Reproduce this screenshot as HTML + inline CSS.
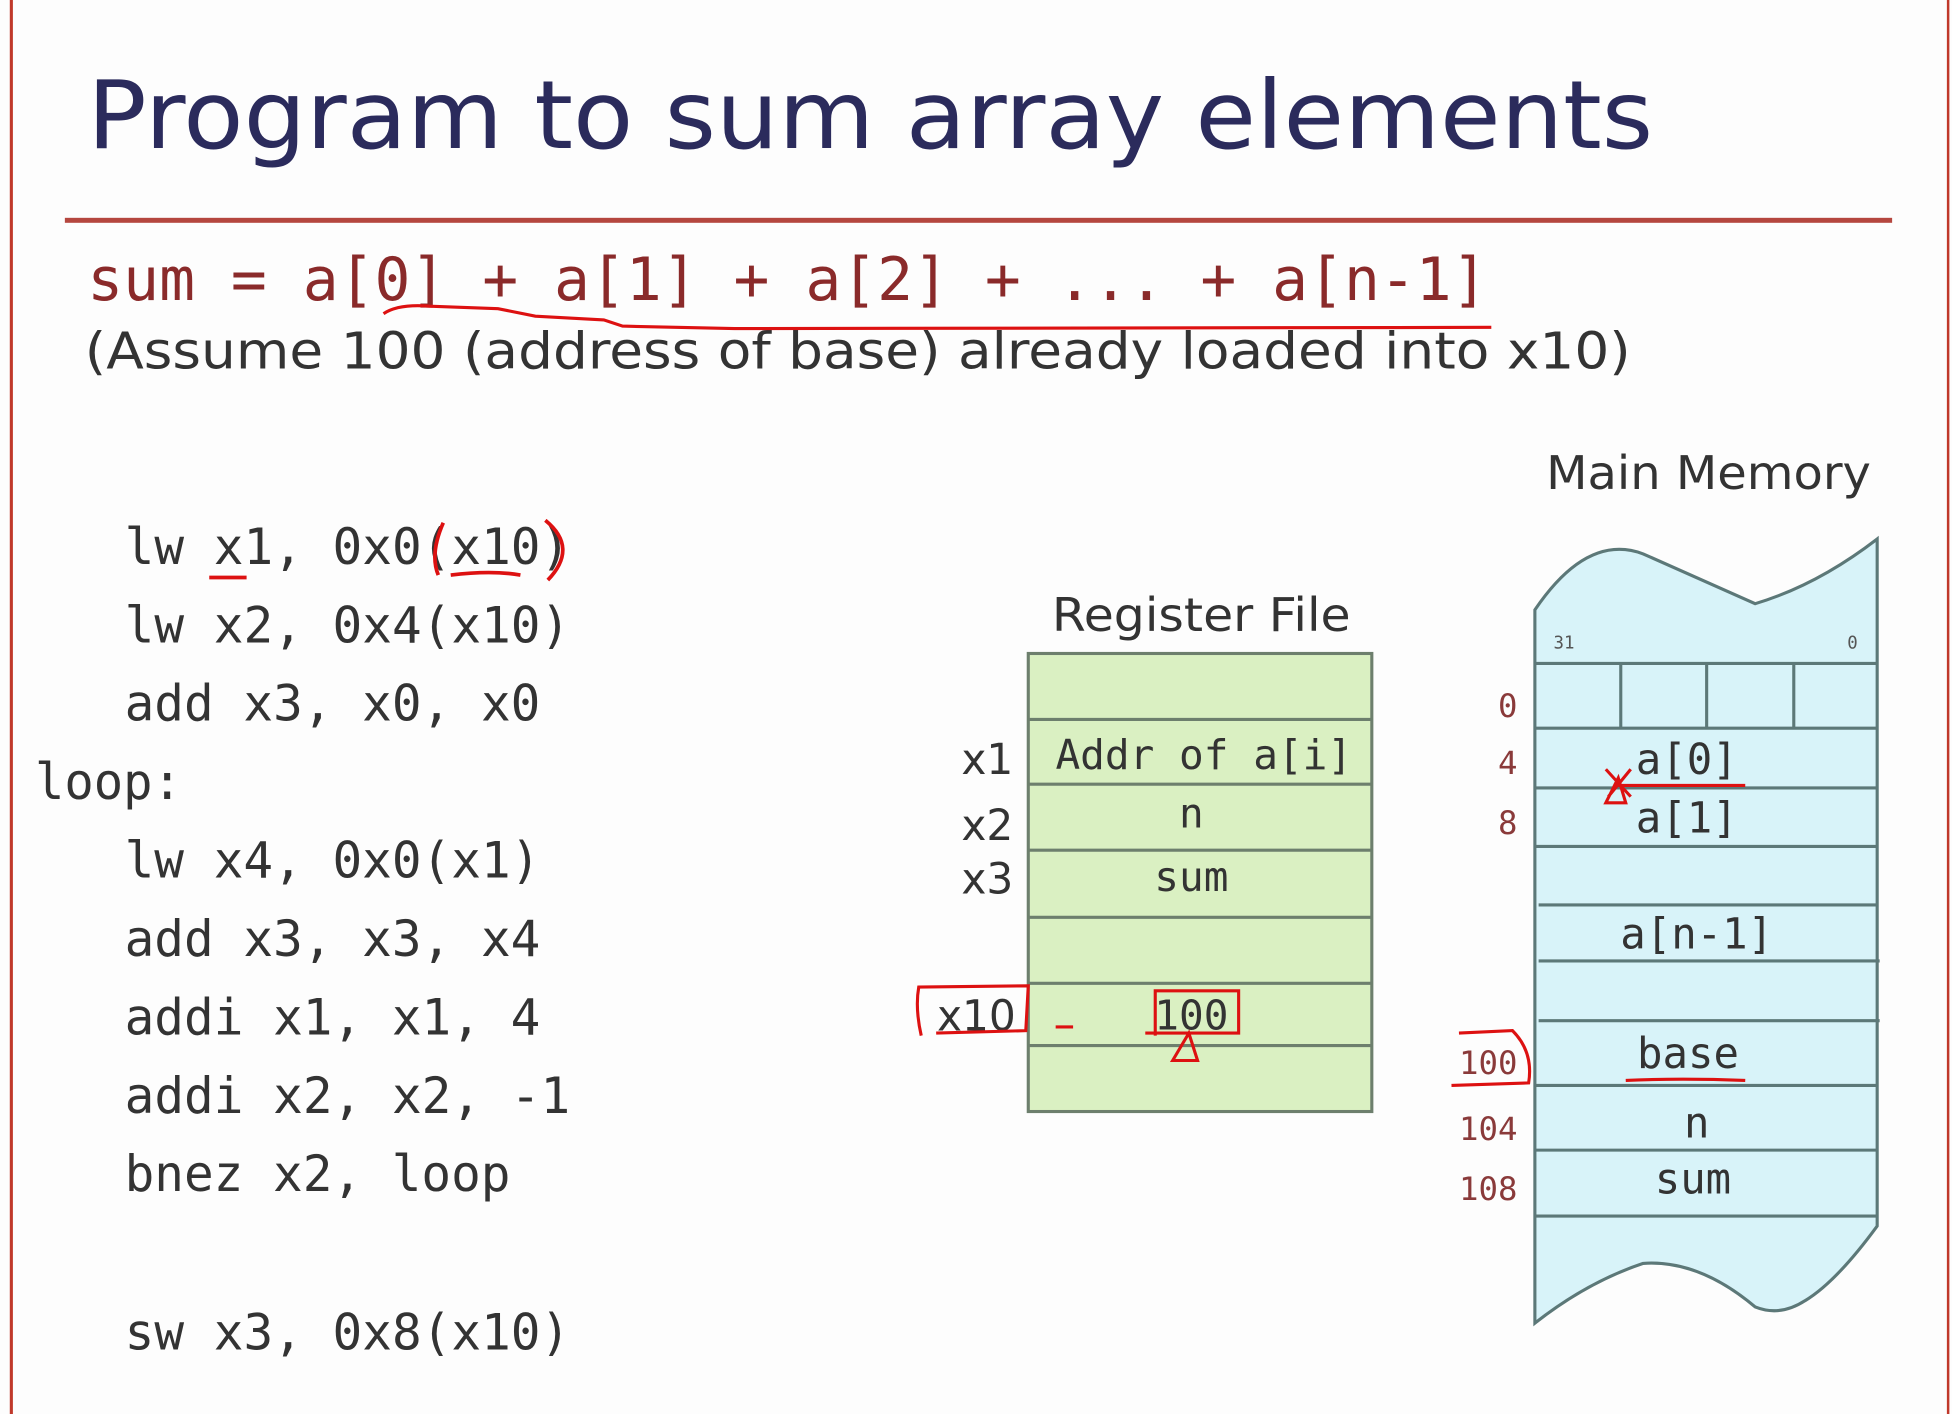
<!DOCTYPE html>
<html><head><meta charset="utf-8"><style>
html,body{margin:0;padding:0;background:#fdfdfd;}
svg{display:block;}
.mono{font-family:"DejaVu Sans Mono","Liberation Mono",monospace;}
.sans{font-family:"DejaVu Sans","Liberation Sans",sans-serif;}
</style></head><body>
<svg width="1952" height="1414" viewBox="0 0 1568 1136" xmlns="http://www.w3.org/2000/svg">
<rect width="1568" height="1136" fill="#fdfdfd"/>
<line x1="9" y1="0" x2="9" y2="1136" stroke="#c0392b" stroke-width="2.5"/>
<line x1="1565" y1="0" x2="1565" y2="1136" stroke="#c0392b" stroke-width="2"/>
<text x="70" y="119" class="sans" font-size="76" fill="#2b2b5c" textLength="1258" lengthAdjust="spacingAndGlyphs">Program to sum array elements</text>
<rect x="52" y="175" width="1468" height="4" fill="#b5473f"/>
<text x="70" y="241" class="mono" font-size="48" fill="#8a2a2a" textLength="1125" lengthAdjust="spacingAndGlyphs">sum = a[0] + a[1] + a[2] + ... + a[n-1]</text>
<text x="68" y="296" class="sans" font-size="41" fill="#333" textLength="1242" lengthAdjust="spacingAndGlyphs">(Assume 100 (address of base) already loaded into x10)</text>
<path d="M308 252 Q320 244 345 246 L400 248 L430 254 L485 257 L500 262 L590 264 L1198 263" stroke="#d11" stroke-width="2.5" fill="none"/>
<g class="mono" font-size="40" fill="#333">
<text x="100" y="453" textLength="358" lengthAdjust="spacingAndGlyphs">lw x1, 0x0(x10)</text>
<text x="100" y="516" textLength="358" lengthAdjust="spacingAndGlyphs">lw x2, 0x4(x10)</text>
<text x="100" y="579" textLength="334" lengthAdjust="spacingAndGlyphs">add x3, x0, x0</text>
<text x="28" y="642" textLength="118" lengthAdjust="spacingAndGlyphs">loop:</text>
<text x="100" y="705" textLength="334" lengthAdjust="spacingAndGlyphs">lw x4, 0x0(x1)</text>
<text x="100" y="768" textLength="334" lengthAdjust="spacingAndGlyphs">add x3, x3, x4</text>
<text x="100" y="831" textLength="334" lengthAdjust="spacingAndGlyphs">addi x1, x1, 4</text>
<text x="100" y="894" textLength="358" lengthAdjust="spacingAndGlyphs">addi x2, x2, -1</text>
<text x="100" y="957" textLength="310" lengthAdjust="spacingAndGlyphs">bnez x2, loop</text>
<text x="100" y="1084" textLength="358" lengthAdjust="spacingAndGlyphs">sw x3, 0x8(x10)</text>
</g>
<g stroke="#d11" stroke-width="3" fill="none">
<line x1="168" y1="464" x2="198" y2="464"/>
<path d="M356 420 Q345 445 352 462 M362 462 Q395 458 418 462 M438 418 Q465 440 440 466"/>
</g>
<text x="845" y="507" class="sans" font-size="37" fill="#333" textLength="240" lengthAdjust="spacingAndGlyphs">Register File</text>
<rect x="826" y="525" width="276" height="368" fill="#daf0c2" stroke="#6d7f6d" stroke-width="2.5"/>
<g stroke="#6d7f6d" stroke-width="2.5">
<line x1="826" y1="578" x2="1102" y2="578"/><line x1="826" y1="630" x2="1102" y2="630"/>
<line x1="826" y1="683" x2="1102" y2="683"/><line x1="826" y1="737" x2="1102" y2="737"/>
<line x1="826" y1="790" x2="1102" y2="790"/><line x1="826" y1="840" x2="1102" y2="840"/>
</g>
<g class="mono" font-size="33" fill="#333" text-anchor="middle">
<text x="967" y="618">Addr of a[i]</text>
<text x="957" y="665">n</text>
<text x="957" y="716">sum</text>
<text x="957" y="827">100</text>
</g>
<g class="sans" font-size="34" fill="#333" text-anchor="end">
<text x="814" y="622">x1</text><text x="814" y="675">x2</text><text x="814" y="718">x3</text>
<text x="816" y="828">x10</text>
</g>
<g stroke="#d11" stroke-width="2.5" fill="none">
<path d="M740 832 Q735 810 738 793 L826 792 L824 828 L752 830"/>
<line x1="848" y1="825" x2="862" y2="825"/>
<path d="M928 832 L928 796 L995 796 L995 830 L920 830 M942 852 L955 830 L962 852 Z"/>
</g>
<text x="1242" y="393" class="sans" font-size="37" fill="#333" textLength="261" lengthAdjust="spacingAndGlyphs">Main Memory</text>
<path d="M1233 490 Q1275 428 1320 445 Q1365 465 1410 485 Q1460 470 1508 433 L1508 985 Q1475 1030 1450 1045 Q1430 1058 1410 1050 Q1365 1012 1320 1015 Q1275 1030 1233 1063 Z" fill="#d8f3f9" stroke="#5c7878" stroke-width="2.5"/>
<g stroke="#5c7878" stroke-width="2.5">
<line x1="1233" y1="533" x2="1508" y2="533"/><line x1="1233" y1="585" x2="1508" y2="585"/>
<line x1="1233" y1="633" x2="1508" y2="633"/><line x1="1233" y1="680" x2="1508" y2="680"/>
<line x1="1236" y1="727" x2="1508" y2="727"/><line x1="1236" y1="772" x2="1510" y2="772"/>
<line x1="1236" y1="820" x2="1510" y2="820"/><line x1="1233" y1="872" x2="1508" y2="872"/>
<line x1="1233" y1="924" x2="1508" y2="924"/><line x1="1233" y1="977" x2="1508" y2="977"/>
<line x1="1302" y1="533" x2="1302" y2="585"/><line x1="1371" y1="533" x2="1371" y2="585"/>
<line x1="1441" y1="533" x2="1441" y2="585"/>
</g>
<text x="1248" y="521" class="mono" font-size="14" fill="#555">31</text>
<text x="1484" y="521" class="mono" font-size="14" fill="#555">0</text>
<g class="mono" font-size="34" fill="#333" text-anchor="middle">
<text x="1355" y="622">a[0]</text><text x="1355" y="669">a[1]</text>
<text x="1363" y="762">a[n-1]</text><text x="1356" y="858">base</text>
<text x="1363" y="914">n</text><text x="1360" y="959">sum</text>
</g>
<g class="mono" font-size="26" fill="#8a3a3a" text-anchor="end">
<text x="1219" y="576">0</text><text x="1219" y="622">4</text><text x="1219" y="670">8</text>
<text x="1219" y="863">100</text><text x="1219" y="916">104</text><text x="1219" y="964">108</text>
</g>
<g stroke="#d11" stroke-width="2.5" fill="none">
<path d="M1290 618 L1310 640 M1310 618 L1292 640 M1290 645 L1300 625 L1306 645 Z"/>
<line x1="1300" y1="631" x2="1402" y2="631"/>
<path d="M1172 830 L1215 828 Q1232 845 1228 870 L1166 872"/>
<path d="M1306 868 Q1350 866 1402 868"/>
</g>
</svg>
</body></html>
